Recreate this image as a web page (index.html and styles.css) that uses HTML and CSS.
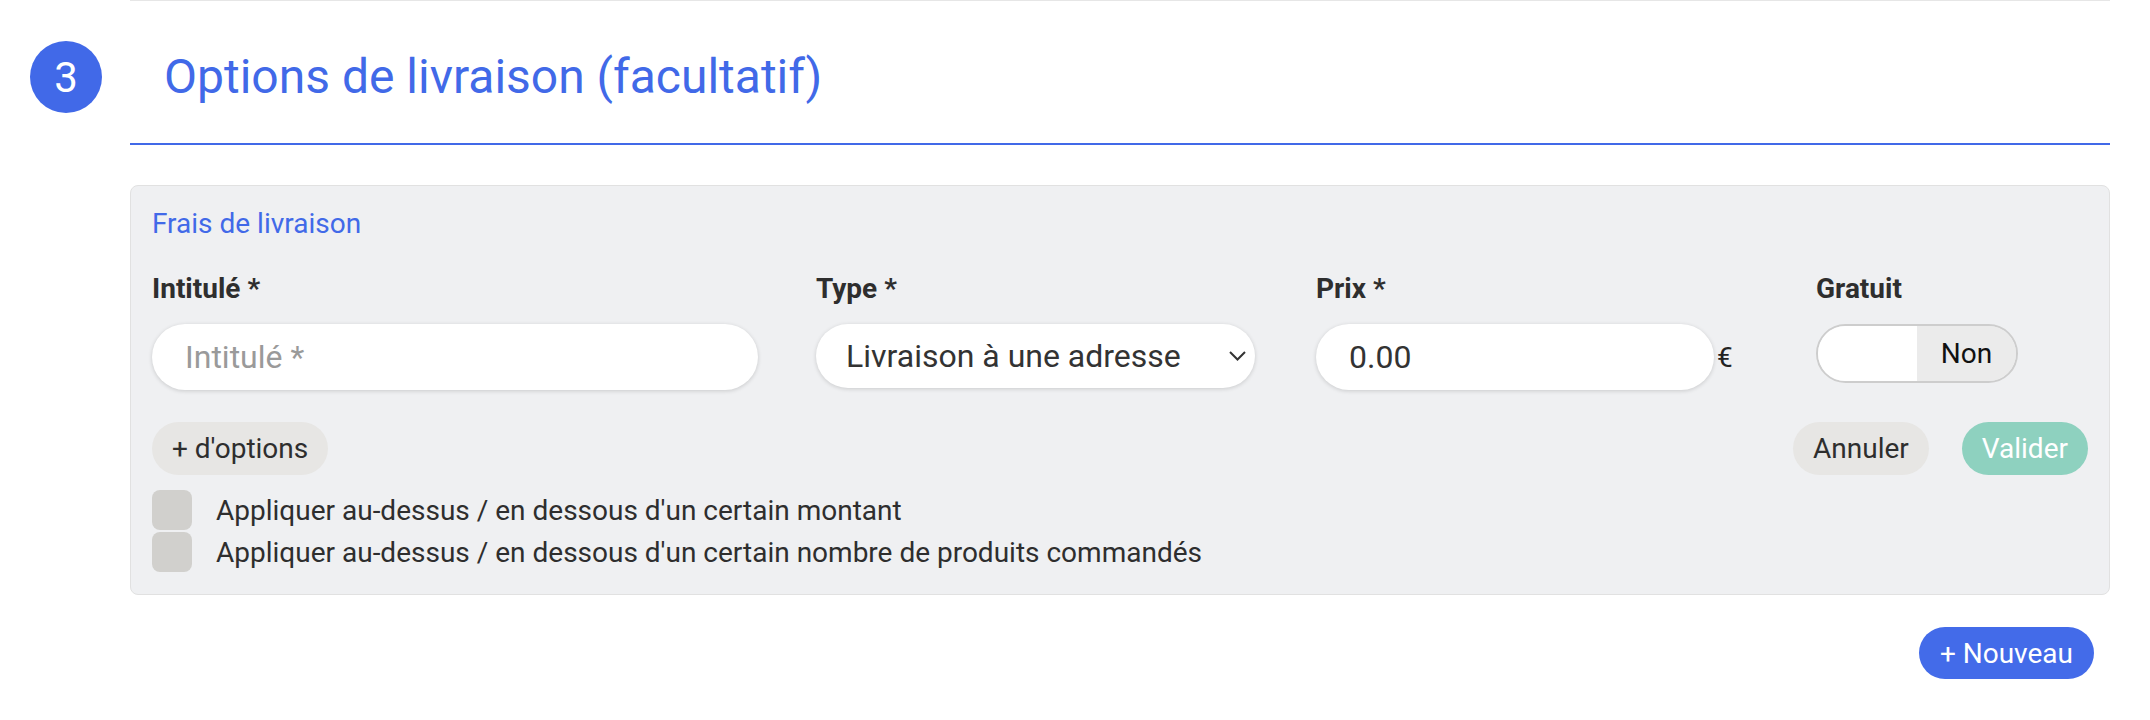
FILE: index.html
```html
<!DOCTYPE html>
<html lang="fr">
<head>
<meta charset="utf-8">
<title>Options de livraison</title>
<link rel="stylesheet" href="styles.css">
</head>
<body>
<div class="section">
  <div class="section-head">
    <div class="step">3</div>
    <h2 class="section-title">Options de livraison (facultatif)</h2>
  </div>

  <div class="panel">
    <div class="panel-title">Frais de livraison</div>
    <div class="fields">
      <div class="field">
        <label class="label">Intitulé *</label>
        <input class="input input-name" type="text" placeholder="Intitulé *">
      </div>
      <div class="field">
        <label class="label">Type *</label>
        <div class="select">
          <span>Livraison à une adresse</span>
          <svg class="chevron" width="17" height="10" viewBox="0 0 17 10"><polyline points="1,1 8.5,8.5 16,1" fill="none" stroke="#333" stroke-width="2"/></svg>
        </div>
      </div>
      <div class="field">
        <label class="label">Prix *</label>
        <div class="price">
          <input class="input input-price" type="text" value="0.00">
          <span class="euro">€</span>
        </div>
      </div>
      <div class="field">
        <label class="label">Gratuit</label>
        <div class="toggle">
          <span class="toggle-off"></span>
          <span class="toggle-on">Non</span>
        </div>
      </div>
    </div>

    <div class="actions">
      <button class="btn btn-gray">+ d'options</button>
      <div class="actions-right">
        <button class="btn btn-gray">Annuler</button>
        <button class="btn btn-mint">Valider</button>
      </div>
    </div>

    <div class="checks">
      <div class="check"><span class="box"></span><span>Appliquer au-dessus / en dessous d'un certain montant</span></div>
      <div class="check"><span class="box"></span><span>Appliquer au-dessus / en dessous d'un certain nombre de produits commandés</span></div>
    </div>
  </div>

  <div class="footer">
    <button class="btn btn-blue">+ Nouveau</button>
  </div>
</div>
</body>
</html>
```

FILE: styles.css
```css
* { box-sizing: border-box; }
html, body { margin: 0; padding: 0; background: #fff; }
body {
  font-family: Roboto, "Liberation Sans", sans-serif;
  color: #333;
}
.section {
  margin: 0 40px 0 130px;
  border-top: 1px solid #e6e6e6;
}
.section-head {
  display: flex;
  align-items: center;
  gap: 62px;
  padding: 40px 0 30px 0;
  border-bottom: 2px solid #4169e8;
}
.step {
  width: 72px;
  height: 72px;
  margin-left: -100px;
  border-radius: 50%;
  background: #4169e8;
  color: #fff;
  font-size: 42px;
  display: flex;
  align-items: center;
  justify-content: center;
  flex: none;
}
.section-title {
  margin: 0;
  font-size: 48px;
  font-weight: 400;
  color: #4169e8;
  line-height: 56px;
}
.panel {
  margin-top: 40px;
  background: #eff0f2;
  border: 1px solid #e1e1e1;
  border-radius: 8px;
  padding: 21px 21px 22px 21px;
}
.panel-title {
  font-size: 28px;
  line-height: 33px;
  color: #4169e8;
}
.fields {
  display: grid;
  grid-template-columns: 664px 500px 500px 1fr;
  margin-top: 32px;
}
.field { display: flex; flex-direction: column; align-items: flex-start; }
.label {
  font-size: 28px;
  font-weight: 700;
  line-height: 33px;
  color: #2e2e2e;
  margin-bottom: 19px;
}
.input {
  height: 66px;
  border: none;
  border-radius: 33px;
  background: #fff;
  box-shadow: 0 1px 4px rgba(0,0,0,0.16);
  font-family: Roboto, "Liberation Sans", sans-serif;
  font-size: 32px;
  color: #333;
  padding: 0 33px;
  outline: none;
}
.input::placeholder { color: #9a9a9a; }
.input-name { width: 606px; }
.select {
  width: 439px;
  height: 64px;
  border-radius: 32px;
  background: #fff;
  box-shadow: 0 1px 4px rgba(0,0,0,0.16);
  font-size: 32px;
  color: #333;
  padding: 0 9px 0 30px;
  display: flex;
  align-items: center;
  justify-content: space-between;
}
.chevron { display: block; }
.price { display: flex; align-items: center; }
.input-price { width: 398px; }
.euro { font-size: 28px; margin-left: 3px; color: #222; }
.toggle {
  width: 202px;
  height: 59px;
  border: 2px solid #cdcdcd;
  border-radius: 30px;
  overflow: hidden;
  display: flex;
}
.toggle-off { flex: 1; background: #fff; }
.toggle-on {
  flex: 1;
  background: #ebebeb;
  display: flex;
  align-items: center;
  justify-content: center;
  font-size: 28px;
  color: #111;
}
.actions {
  display: flex;
  justify-content: space-between;
  align-items: center;
  margin-top: 32px;
}
.actions-right { display: flex; gap: 33px; }
.btn {
  height: 53px;
  border: none;
  border-radius: 27px;
  padding: 0 20px;
  font-family: Roboto, "Liberation Sans", sans-serif;
  font-size: 28px;
  cursor: pointer;
}
.btn-gray { background: #e7e6e4; color: #2e2e2e; }
.btn-mint { background: #8ed1bf; color: #fff; }
.btn-blue { background: #436be9; color: #fff; height: 52px; padding: 0 21px; }
.checks {
  margin-top: 15px;
  display: flex;
  flex-direction: column;
  gap: 2px;
}
.check {
  display: flex;
  align-items: center;
  gap: 24px;
  font-size: 28px;
  line-height: 33px;
  color: #2e2e2e;
}
.box {
  width: 40px;
  height: 40px;
  border-radius: 8px;
  background: #d1d0cd;
  flex: none;
}
.footer {
  display: flex;
  justify-content: flex-end;
  padding-right: 16px;
  margin-top: 32px;
}
```
